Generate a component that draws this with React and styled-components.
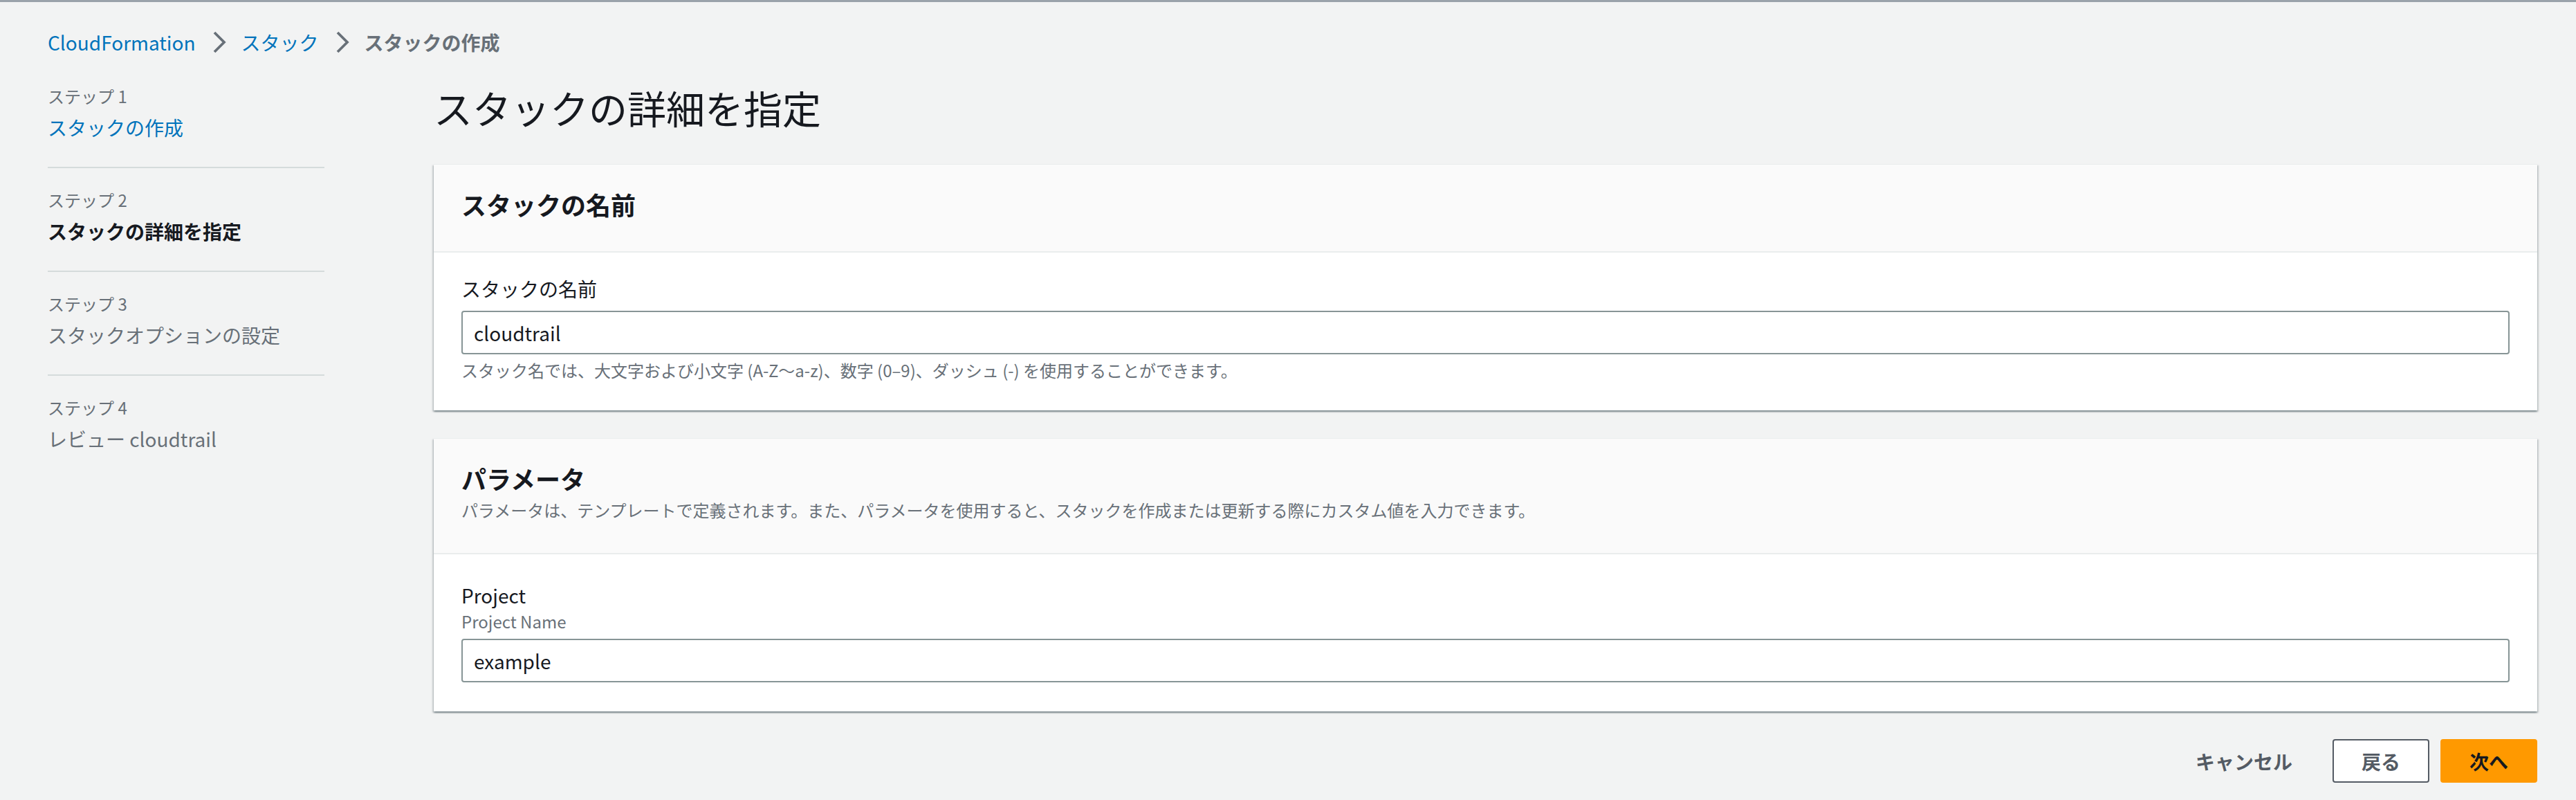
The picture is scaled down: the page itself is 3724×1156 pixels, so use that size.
import styled, { createGlobalStyle } from 'styled-components'

const GlobalStyle = createGlobalStyle`
  body {
    margin: 0;
    background: #f2f3f3;
    font-family: "Noto Sans CJK JP", "Noto Sans", sans-serif;
    color: #16191f;
  }
`

const steps = [
  { label: 'ステップ 1', title: 'スタックの作成', state: 'done' },
  { label: 'ステップ 2', title: 'スタックの詳細を指定', state: 'active' },
  { label: 'ステップ 3', title: 'スタックオプションの設定', state: 'todo' },
  { label: 'ステップ 4', title: 'レビュー cloudtrail', state: 'todo' },
]

function Chevron() {
  return (
    <ChevronIcon viewBox='0 0 20 32' width='20' height='32'>
      <path d='M3 2 L17 16 L3 30' fill='none' stroke='#687078' strokeWidth='3.8' />
    </ChevronIcon>
  )
}

function App() {
  return (
    <Page>
      <GlobalStyle />
      <Breadcrumbs>
        <Crumb href='#'>CloudFormation</Crumb>
        <Chevron />
        <Crumb href='#'>スタック</Crumb>
        <Chevron />
        <CurrentCrumb>スタックの作成</CurrentCrumb>
      </Breadcrumbs>
      <Layout>
        <Nav>
          {steps.map((step, i) => (
            <Step key={step.label} $first={i === 0}>
              <StepLabel>{step.label}</StepLabel>
              <StepTitle $state={step.state}>{step.title}</StepTitle>
            </Step>
          ))}
        </Nav>
        <Main>
          <Title>スタックの詳細を指定</Title>
          <Card>
            <CardHeader>
              <CardTitle>スタックの名前</CardTitle>
            </CardHeader>
            <CardBody>
              <FieldLabel>スタックの名前</FieldLabel>
              <Input defaultValue='cloudtrail' />
              <Hint>
                スタック名では、大文字および小文字 (A-Z〜a-z)、数字 (0–9)、ダッシュ (-)
                を使用することができます。
              </Hint>
            </CardBody>
          </Card>
          <Card>
            <CardHeader>
              <CardTitle>パラメータ</CardTitle>
              <CardDescription>
                パラメータは、テンプレートで定義されます。また、パラメータを使用すると、スタックを作成または更新する際にカスタム値を入力できます。
              </CardDescription>
            </CardHeader>
            <CardBody $top='37px'>
              <FieldLabel $described>Project</FieldLabel>
              <FieldDescription>Project Name</FieldDescription>
              <Input defaultValue='example' />
            </CardBody>
          </Card>
          <Actions>
            <Button $variant='link'>キャンセル</Button>
            <Button $variant='normal'>戻る</Button>
            <Button $variant='primary'>次へ</Button>
          </Actions>
        </Main>
      </Layout>
    </Page>
  )
}

export default App

const Page = styled.div`
  min-height: 100vh;
  box-sizing: border-box;
  border-top: 3px solid #9aa2aa;
  padding: 36px 56px 40px 69px;
  background: #f2f3f3;
`
const Breadcrumbs = styled.nav`
  display: flex;
  align-items: center;
  height: 44px;
  font-size: 28px;
  line-height: 44px;
`
const Crumb = styled.a`
  color: #0073bb;
  text-decoration: none;
`
const CurrentCrumb = styled.span`
  color: #687078;
  font-weight: 700;
`
const ChevronIcon = styled.svg`
  margin: 0 22px 0 24px;
  flex: none;
`
const Layout = styled.div`
  display: flex;
  margin-top: 32px;
`
const Nav = styled.div`
  width: 400px;
  flex: none;
  margin-right: 158px;
  padding-top: 8px;
`
const Step = styled.div`
  display: flex;
  flex-direction: column;
  gap: 7px;
  padding: ${(p) => (p.$first ? '0' : '30px')} 0 35px;
  border-top: ${(p) => (p.$first ? 'none' : '2px solid #d5dbdb')};
`
const StepLabel = styled.div`
  font-size: 24px;
  line-height: 32px;
  color: #687078;
`
const stepColors = { done: '#0073bb', active: '#16191f', todo: '#687078' }
const StepTitle = styled.div`
  font-size: 28px;
  line-height: 44px;
  color: ${(p) => stepColors[p.$state]};
  font-weight: ${(p) => (p.$state === 'active' ? 700 : 400)};
`
const Main = styled.main`
  flex: 1;
  min-width: 0;
`
const Title = styled.h1`
  margin: 0 0 42px;
  font-size: 56px;
  line-height: 80px;
  font-weight: 400;
  color: #16191f;
`
const Card = styled.section`
  background: #fff;
  border-top: 1px solid #eaeded;
  margin-bottom: 40px;
  box-shadow: 0 2px 2px 0 rgba(0, 28, 36, 0.3), 2px 2px 2px 0 rgba(0, 28, 36, 0.15),
    -2px 2px 2px 0 rgba(0, 28, 36, 0.15);
`
const CardHeader = styled.header`
  background: #fafafa;
  border-bottom: 2px solid #eaeded;
  padding: 35px 40px 46px;
`
const CardTitle = styled.h2`
  margin: 0;
  font-size: 36px;
  line-height: 44px;
  font-weight: 700;
  color: #16191f;
`
const CardDescription = styled.p`
  margin: 8px 0 0;
  font-size: 24px;
  line-height: 32px;
  color: #687078;
`
const CardBody = styled.div`
  display: flex;
  flex-direction: column;
  padding: ${(p) => p.$top || '30px'} 40px 42px;
`
const FieldLabel = styled.label`
  font-size: 28px;
  line-height: 44px;
  color: #16191f;
  margin-bottom: ${(p) => (p.$described ? '0' : '10px')};
`
const FieldDescription = styled.div`
  font-size: 24px;
  line-height: 32px;
  color: #687078;
  margin-bottom: 9px;
`
const Input = styled.input`
  box-sizing: border-box;
  width: 100%;
  height: 63px;
  padding: 0 16px;
  border: 2px solid #879596;
  border-radius: 4px;
  font-family: inherit;
  font-size: 28px;
  color: #16191f;
  background: #fff;
  outline: none;
`
const Hint = styled.div`
  margin-top: 7px;
  font-size: 24px;
  line-height: 32px;
  color: #687078;
`
const Actions = styled.div`
  display: flex;
  justify-content: flex-end;
  gap: 16px;
`
const buttonBorders = { link: 'transparent', normal: '#545b64', primary: '#ff9900' }
const buttonBackgrounds = { link: 'transparent', normal: '#fff', primary: '#ff9900' }
const Button = styled.button`
  box-sizing: border-box;
  height: 63px;
  padding: 0 40px;
  border-radius: 4px;
  font-family: inherit;
  font-size: 28px;
  line-height: 44px;
  font-weight: 700;
  cursor: pointer;
  border: 2px solid ${(p) => buttonBorders[p.$variant]};
  background: ${(p) => buttonBackgrounds[p.$variant]};
  color: ${(p) => (p.$variant === 'primary' ? '#16191f' : '#545b64')};
`
